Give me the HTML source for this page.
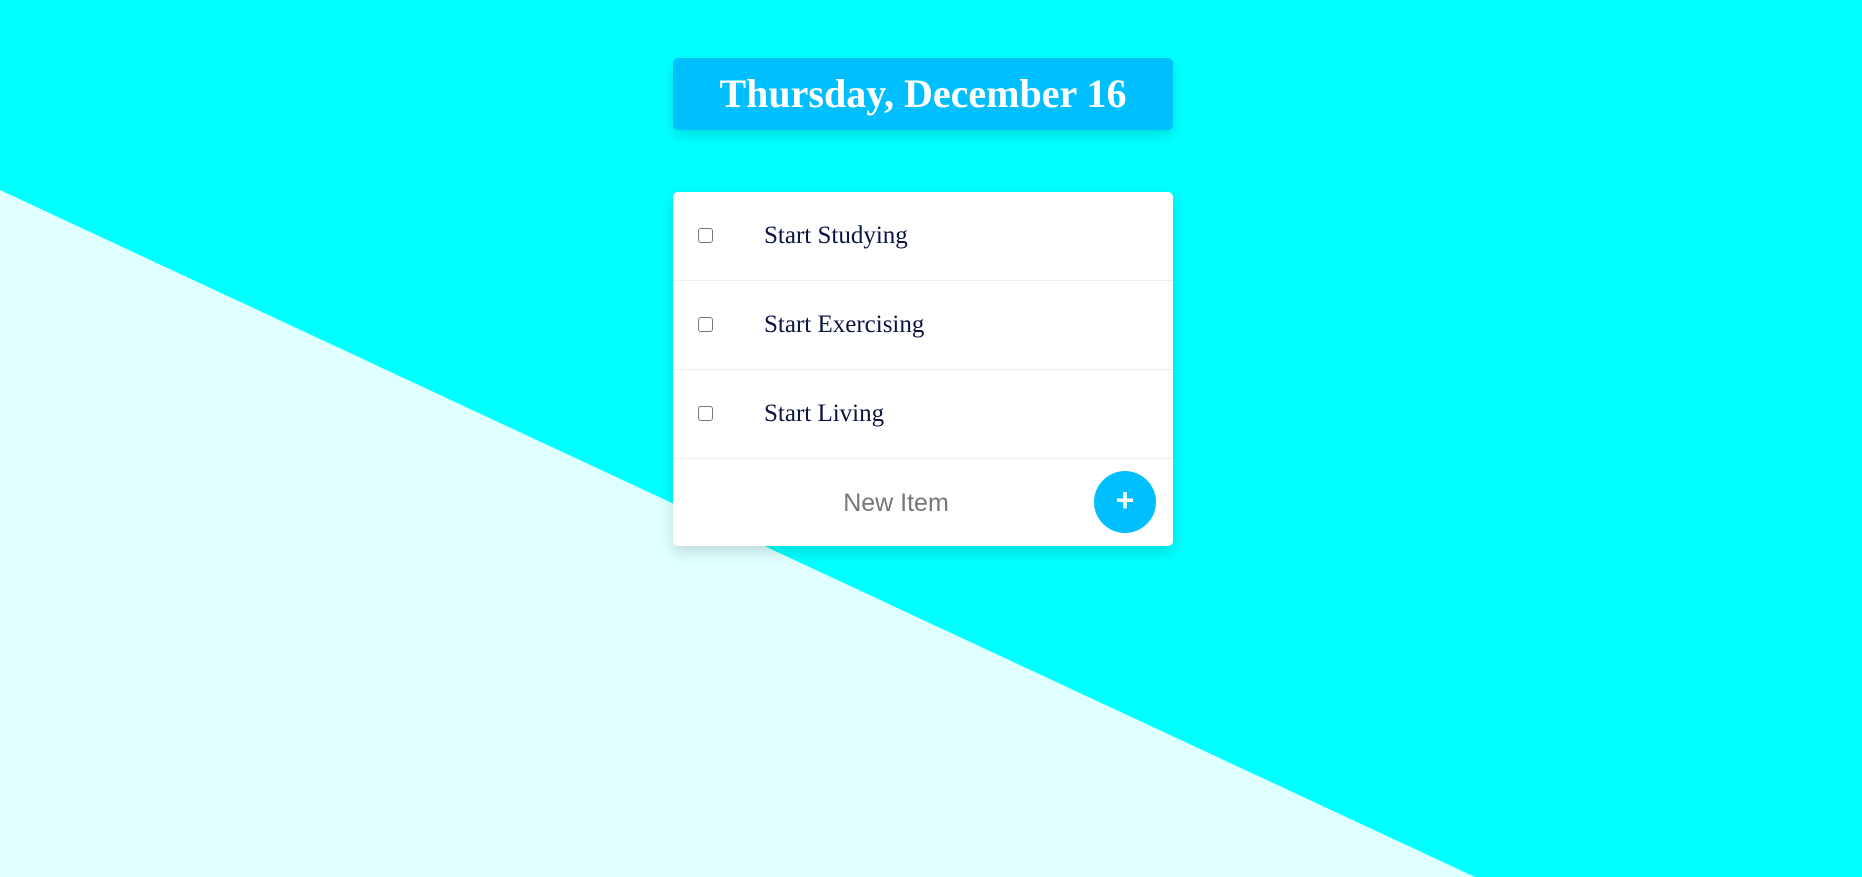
<!DOCTYPE html>
<html><head><style>
html,body{margin:0;padding:0;width:1862px;height:877px;overflow:hidden;background:#00ffff;position:relative}
.bg{position:absolute;left:0;top:0}
.head{position:absolute;left:673px;top:58px;width:500px;height:72px;background:#00bfff;border-radius:5px;box-shadow:0 6px 12px rgba(0,0,0,0.12);color:#fff;font:bold 40px "Liberation Serif",serif;text-align:center;line-height:72px}
.card{position:absolute;left:673px;top:192px;width:500px;height:354px;background:#fff;border-radius:5px;box-shadow:0 6px 14px rgba(0,0,0,0.15)}
.row{height:88px;border-bottom:1px solid #eee;position:relative;font:25px "Liberation Serif",serif;color:#0a1440}
.cb{position:absolute;left:25px;top:36px;width:15px;height:15px;border:1px solid #767676;border-radius:3px;background:#fff;box-sizing:border-box}
.row span{position:absolute;left:91px;top:30px;line-height:28px}
.new{position:absolute;left:0;top:265px;width:500px;height:89px}
.new span{position:absolute;left:0;width:446px;text-align:center;top:32px;font:25px "Liberation Sans",sans-serif;color:#777}
.plus{position:absolute;left:421px;top:14px;width:62px;height:62px;border-radius:50%;background:#00bfff;color:#fff;font:bold 32px "Liberation Sans",sans-serif;text-align:center;line-height:58px}
</style></head><body>
<svg class="bg" width="1862" height="877"><polygon points="0,190 1475,877 0,877" fill="#e0ffff"/></svg>
<div class="head">Thursday, December 16</div>
<div class="card">
<div class="row"><div class="cb"></div><span>Start Studying</span></div>
<div class="row"><div class="cb"></div><span>Start Exercising</span></div>
<div class="row"><div class="cb"></div><span>Start Living</span></div>
<div class="new"><span>New Item</span><div class="plus">+</div></div>
</div>
</body></html>
